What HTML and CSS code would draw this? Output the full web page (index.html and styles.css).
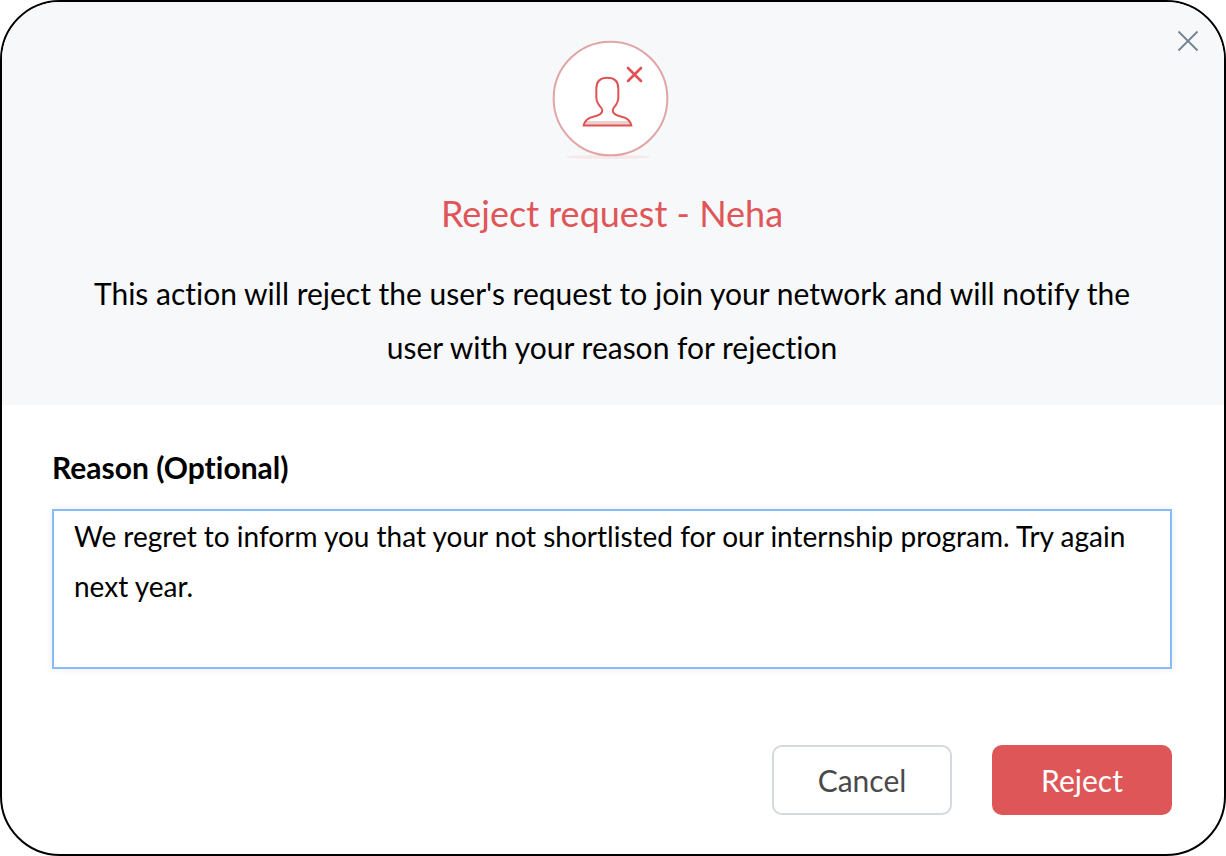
FILE: index.html
```html
<!DOCTYPE html>
<html lang="en">
<head>
  <meta charset="utf-8">
  <meta name="viewport" content="width=device-width, initial-scale=1">
  <title>Reject request</title>
  <link rel="stylesheet" href="styles.css">
</head>
<body>
  <main class="modal" role="dialog" aria-labelledby="modal-title">
    <button class="modal-close" type="button" aria-label="Close">
      <svg class="close-icon" viewBox="0 0 20 20" aria-hidden="true">
        <path d="M0.5 0.5L19.5 19.5M19.5 0.5L0.5 19.5"/>
      </svg>
    </button>
    <header class="modal-header">
      <svg class="user-icon" viewBox="36 30 360 360" aria-hidden="true">
        <ellipse class="icon-shadow" cx="204" cy="381" rx="127" ry="6"/>
        <circle class="icon-ring" cx="211.500" cy="205.500" r="170.500"/>
        <rect class="icon-fill" x="136" y="273" width="133" height="12"/>
        <path class="icon-line" d="M131 286.500H274C271 272 260 263 245 260C229 257 218 252 218 241C218 230 235 227 235 202V176C235 154 222 143.500 202 143.500C182 143.500 169 154 169 176V202C169 227 187 230 187 241C187 252 176 257 160 260C145 263 134 272 131 286.500Z"/>
        <path class="icon-cross" d="M264 114L303 153M303 114L264 153"/>
      </svg>
      <h1 class="modal-title" id="modal-title">Reject request - Neha</h1>
      <p class="modal-text">This action will reject the user's request to join your network and will notify the user with your reason for rejection</p>
    </header>
    <form class="modal-form">
      <label class="reason-label" for="reason">Reason (Optional)</label>
      <textarea class="reason-input" id="reason" name="reason" spellcheck="false">We regret to inform you that your not shortlisted for our internship program. Try again next year.</textarea>
      <div class="modal-actions">
        <button class="button button-cancel" type="button">Cancel</button>
        <button class="button button-reject" type="submit">Reject</button>
      </div>
    </form>
  </main>
</body>
</html>
```

FILE: styles.css
```css
* {
  box-sizing: border-box;
}

body {
  margin: 0;
  background: #fff;
  color: #000;
  font-family: Lato, "Open Sans", sans-serif;
  font-variant-ligatures: no-common-ligatures;
}

.modal {
  position: relative;
  overflow: hidden;
  border: 2px solid #000;
  border-radius: 60px;
  background: #fff;
}

.modal-close {
  position: absolute;
  top: 15px;
  right: 12px;
  display: flex;
  align-items: center;
  justify-content: center;
  width: 48px;
  height: 48px;
  padding: 0;
  border: 0;
  border-radius: 50%;
  background: #f7f8f9;
}

.close-icon {
  width: 20px;
  height: 20px;
  overflow: visible;
  stroke: #748294;
  stroke-width: 1.8;
}

.modal-header {
  display: flex;
  flex-direction: column;
  align-items: center;
  padding: 38px 52px 31px 50px;
  background: #f7f8fa;
  text-align: center;
}

.user-icon {
  width: 120px;
  height: 120px;
  fill: none;
}

.icon-shadow {
  fill: #f7e8ea;
}

.icon-ring {
  fill: #fff;
  stroke: #e2a5a7;
  stroke-width: 6;
}

.icon-fill {
  fill: #ecd0d1;
}

.icon-line,
.icon-cross {
  stroke: #df5355;
  stroke-width: 6;
}

.icon-cross {
  stroke-width: 8;
  stroke-linecap: round;
}

.modal-title {
  margin: 26px 0;
  color: #df5658;
  font-size: 36px;
  font-weight: 400;
  line-height: 54px;
}

.modal-text {
  max-width: 1060px;
  margin: 0;
  font-size: 30px;
  line-height: 54px;
}

.modal-form {
  display: flex;
  flex-direction: column;
  padding: 38px 52px 39px 50px;
}

.reason-label {
  margin-bottom: 18px;
  font-size: 30px;
  font-weight: 700;
  line-height: 48px;
}

.reason-input {
  height: 160px;
  padding: 0 20px;
  border: 2px solid #86bdf8;
  border-radius: 0;
  outline: 0;
  background: #fff;
  box-shadow: 0 0 8px rgba(0, 0, 0, 0.08);
  color: #000;
  font: 28px/50px Lato, "Open Sans", sans-serif;
  font-variant-ligatures: no-common-ligatures;
  resize: none;
}

.modal-actions {
  display: flex;
  justify-content: flex-end;
  gap: 40px;
  margin-top: 76px;
}

.button {
  width: 180px;
  height: 70px;
  padding: 0;
  border: 2px solid #d5d9de;
  border-radius: 10px;
  background: #fff;
  color: #4a4a4a;
  font: 30px/48px Lato, "Open Sans", sans-serif;
}

.button-reject {
  border-color: #de5657;
  background: #de5657;
  color: #fff;
}
```
